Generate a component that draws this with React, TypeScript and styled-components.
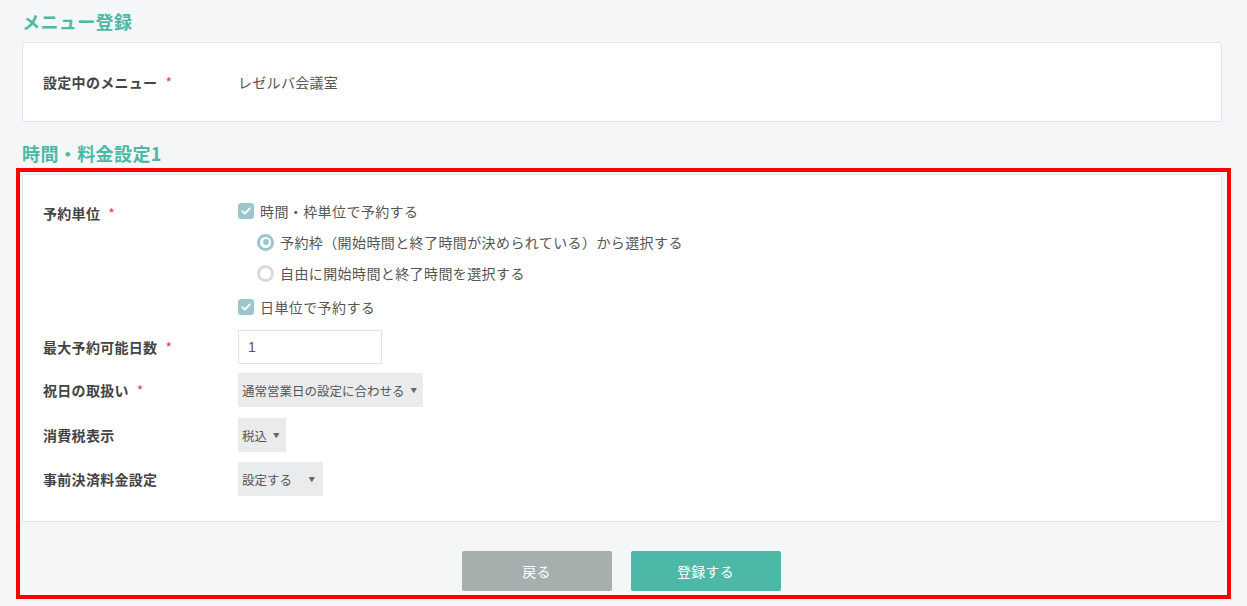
import React from 'react';
import styled, { createGlobalStyle } from 'styled-components';

const GlobalStyle = createGlobalStyle`
  html, body {
    margin: 0;
    padding: 0;
    background-color: #f5f6f8;
  }
  body {
    font-family: "Noto Sans CJK JP", "Noto Sans", "Liberation Sans", sans-serif;
    color: #555555;
  }
`;

const CheckIcon = () => (
  <svg width="10" height="8" viewBox="0 0 10 8" fill="none">
    <path
      d="M1.2 4.1 L3.8 6.5 L8.8 1.4"
      stroke="#ffffff"
      strokeWidth="1.8"
      strokeLinecap="round"
      strokeLinejoin="round"
    />
  </svg>
);

const App = () => {
  return (
    <>
      <GlobalStyle />
      <Page>
        <SectionTitle>メニュー登録</SectionTitle>
        <Card $padding="29px 20px">
          <FormRow>
            <Label>
              設定中のメニュー<Required>*</Required>
            </Label>
            <Value>レゼルバ会議室</Value>
          </FormRow>
        </Card>

        <SectionTitle $top={19}>時間・料金設定1</SectionTitle>
        <Highlighted>
          <Card $padding="26px 20px 25px">
            <FormList>
              <FormRow $align="start">
                <Label $pad={2}>
                  予約単位<Required>*</Required>
                </Label>
                <Options>
                  <Option>
                    <CheckBox>
                      <CheckIcon />
                    </CheckBox>
                    時間・枠単位で予約する
                  </Option>
                  <Option $indent={19} $gap={11}>
                    <Radio $checked />
                    予約枠（開始時間と終了時間が決められている）から選択する
                  </Option>
                  <Option $indent={19} $gap={11}>
                    <Radio />
                    自由に開始時間と終了時間を選択する
                  </Option>
                  <Option $gap={14}>
                    <CheckBox>
                      <CheckIcon />
                    </CheckBox>
                    日単位で予約する
                  </Option>
                </Options>
              </FormRow>
              <FormRow $gap={13}>
                <Label>
                  最大予約可能日数<Required>*</Required>
                </Label>
                <TextInput>1</TextInput>
              </FormRow>
              <FormRow $gap={9}>
                <Label>
                  祝日の取扱い<Required>*</Required>
                </Label>
                <SelectBox $width={185}>
                  通常営業日の設定に合わせる<Arrow>▼</Arrow>
                </SelectBox>
              </FormRow>
              <FormRow $gap={11}>
                <Label>消費税表示</Label>
                <SelectBox $width={48}>
                  税込<Arrow>▼</Arrow>
                </SelectBox>
              </FormRow>
              <FormRow $gap={10}>
                <Label>事前決済料金設定</Label>
                <SelectBox $width={85}>
                  設定する<Arrow>▼</Arrow>
                </SelectBox>
              </FormRow>
            </FormList>
          </Card>
          <Footer>
            <Button $variant="back">戻る</Button>
            <Button>登録する</Button>
          </Footer>
          <RedFrame />
        </Highlighted>
      </Page>
    </>
  );
};

const Page = styled.div`
  width: 1200px;
  padding: 9px 0 20px 22px;
`;

const SectionTitle = styled.h2<{ $top?: number }>`
  margin: ${(p) => p.$top ?? 0}px 0 9px 0;
  font-size: 18px;
  line-height: 24px;
  font-weight: 700;
  letter-spacing: 0.4px;
  color: #4cb9a5;
`;

const Card = styled.div<{ $padding: string }>`
  background-color: #ffffff;
  border: 1px solid #e2e6ea;
  border-radius: 2px;
  padding: ${(p) => p.$padding};
`;

const FormList = styled.div`
  display: flex;
  flex-direction: column;
`;

const FormRow = styled.div<{ $align?: string; $gap?: number }>`
  display: grid;
  grid-template-columns: 195px 1fr;
  align-items: ${(p) => p.$align ?? 'center'};
  margin-top: ${(p) => p.$gap ?? 0}px;
`;

const Label = styled.div<{ $pad?: number }>`
  font-size: 14px;
  line-height: 20px;
  font-weight: 700;
  letter-spacing: 0.3px;
  color: #444444;
  padding-top: ${(p) => p.$pad ?? 0}px;
`;

const Required = styled.span`
  color: #e8424a;
  font-weight: 400;
  margin-left: 8px;
`;

const Value = styled.div`
  font-size: 14px;
  line-height: 20px;
  letter-spacing: 0.3px;
  color: #555555;
`;

const Options = styled.div`
  display: flex;
  flex-direction: column;
`;

const Option = styled.label<{ $indent?: number; $gap?: number }>`
  display: flex;
  align-items: center;
  gap: 6px;
  font-size: 14px;
  line-height: 20px;
  letter-spacing: 0.4px;
  color: #555555;
  margin-left: ${(p) => p.$indent ?? 0}px;
  margin-top: ${(p) => p.$gap ?? 0}px;
`;

const CheckBox = styled.span`
  display: flex;
  align-items: center;
  justify-content: center;
  width: 16px;
  height: 16px;
  border-radius: 3px;
  background-color: #9dc5ce;
  flex-shrink: 0;
`;

const Radio = styled.span<{ $checked?: boolean }>`
  position: relative;
  box-sizing: border-box;
  width: 17px;
  height: 17px;
  border-radius: 50%;
  border: 3px solid ${(p) => (p.$checked ? '#9dc5ce' : '#d6dbde')};
  background-color: #ffffff;
  flex-shrink: 0;
  &::after {
    content: '';
    display: ${(p) => (p.$checked ? 'block' : 'none')};
    position: absolute;
    left: 50%;
    top: 50%;
    width: 6px;
    height: 6px;
    margin: -3px 0 0 -3px;
    border-radius: 50%;
    background-color: #9dc5ce;
  }
`;

const TextInput = styled.div`
  box-sizing: border-box;
  width: 144px;
  height: 34px;
  border: 1px solid #dfe4e8;
  background-color: #ffffff;
  padding: 0 9px;
  display: flex;
  align-items: center;
  font-size: 14px;
  color: #555555;
  font-family: "Liberation Sans", "Noto Sans CJK JP", sans-serif;
`;

const SelectBox = styled.div<{ $width: number }>`
  box-sizing: border-box;
  width: ${(p) => p.$width}px;
  height: 34px;
  background-color: #e9ebed;
  padding: 0 8px 0 4px;
  display: flex;
  align-items: center;
  justify-content: space-between;
  font-size: 12.5px;
  color: #555555;
  white-space: nowrap;
`;

const Arrow = styled.span`
  font-size: 6.5px;
  color: #666666;
  margin-left: 6px;
`;

const Footer = styled.div`
  display: flex;
  justify-content: center;
  gap: 19px;
  padding: 29px 2px 0 0;
`;

const Button = styled.button<{ $variant?: 'back' | 'submit' }>`
  width: 150px;
  height: 40px;
  border: none;
  border-radius: 2px;
  font-family: inherit;
  font-size: 14px;
  letter-spacing: 0.3px;
  color: #ffffff;
  background-color: ${(p) => (p.$variant === 'back' ? '#a6aeae' : '#4bb9a6')};
  cursor: pointer;
`;

const Highlighted = styled.div`
  position: relative;
`;

const RedFrame = styled.div`
  position: absolute;
  left: -6px;
  top: -6px;
  right: -9px;
  bottom: -8px;
  border: 4px solid #ff0000;
  pointer-events: none;
`;

export default App;
